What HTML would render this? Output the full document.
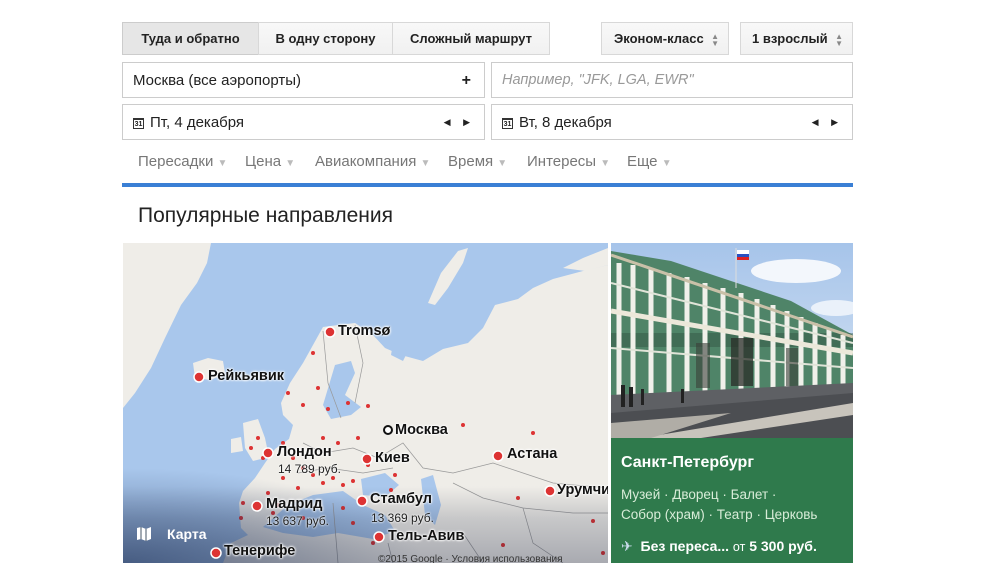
<!DOCTYPE html>
<html><head><meta charset="utf-8"><style>
body{margin:0;width:1000px;height:563px;background:#fff;font-family:"Liberation Sans",sans-serif;position:relative;overflow:hidden}
.a{position:absolute;box-sizing:border-box}
.btn{background:linear-gradient(#f8f8f8,#f1f1f1);border:1px solid #d8d8d8;color:#222;font-size:13px;font-weight:bold;text-align:center;line-height:32px}
.inp{border:1px solid #ccc;background:#fff;font-size:15px;color:#222;line-height:35px;padding-left:10px}
.f{position:absolute;top:153px;font-size:15px;color:#777}
.f i{font-style:normal;color:#bbb;font-size:10px}
.lb{position:absolute;font-weight:bold;font-size:14.5px;color:#111;text-shadow:0 0 2px #fff,0 0 2px #fff,0 0 3px #fff}
.pr{position:absolute;font-size:12px;color:#222;text-shadow:0 0 2px #fff,0 0 2px #fff}
.cal{display:inline-block;width:11px;height:11px;border:1px solid #333;font-size:7px;line-height:9px;text-align:center;vertical-align:1px;margin-right:6px;font-weight:bold;box-sizing:border-box;border-top-width:2px}
</style></head><body>
<div class="a btn" style="left:122px;top:22px;width:137px;height:33px;background:#e6e6e6;border-color:#ccc">Туда и обратно</div>
<div class="a btn" style="left:258px;top:22px;width:135px;height:33px">В одну сторону</div>
<div class="a btn" style="left:392px;top:22px;width:158px;height:33px">Сложный маршрут</div>
<div class="a btn" style="left:601px;top:22px;width:128px;height:33px;text-align:left;padding-left:12px">Эконом-класс<span style="position:absolute;right:9px;color:#888;font-size:8px;line-height:7px;top:10px">▲<br>▼</span></div>
<div class="a btn" style="left:740px;top:22px;width:113px;height:33px;text-align:left;padding-left:11px">1 взрослый<span style="position:absolute;right:9px;color:#888;font-size:8px;line-height:7px;top:10px">▲<br>▼</span></div>
<div class="a inp" style="left:122px;top:62px;width:363px;height:36px">Москва (все аэропорты)<span style="position:absolute;right:13px;font-weight:bold;font-size:16px">+</span></div>
<div class="a inp" style="left:491px;top:62px;width:362px;height:36px;color:#999;font-style:italic;font-size:14.5px">Например, "JFK, LGA, EWR"</div>
<div class="a inp" style="left:122px;top:104px;width:363px;height:36px"><span class="cal">31</span>Пт, 4 декабря<span style="position:absolute;right:14px;font-size:9px">◀&nbsp;&nbsp;&nbsp;&nbsp;&nbsp;▶</span></div>
<div class="a inp" style="left:491px;top:104px;width:362px;height:36px"><span class="cal">31</span>Вт, 8 декабря<span style="position:absolute;right:14px;font-size:9px">◀&nbsp;&nbsp;&nbsp;&nbsp;&nbsp;▶</span></div>
<div class="f" style="left:138px">Пересадки <i>▼</i></div>
<div class="f" style="left:245px">Цена <i>▼</i></div>
<div class="f" style="left:315px">Авиакомпания <i>▼</i></div>
<div class="f" style="left:448px">Время <i>▼</i></div>
<div class="f" style="left:527px">Интересы <i>▼</i></div>
<div class="f" style="left:627px">Еще <i>▼</i></div>
<div class="a" style="left:122px;top:183px;width:731px;height:4px;background:#3a7fd5"></div>
<div class="a" style="left:138px;top:204px;font-size:21px;color:#222">Популярные направления</div>

<div class="a" style="left:123px;top:243px;width:485px;height:320px;overflow:hidden;background:#a9c7ec">
<svg width="485" height="320" style="position:absolute;left:0;top:0">
<g fill="#efede8">
<polygon points="62,0 88,0 84,20 74,40 58,62 42,95 28,125 12,150 0,165 0,0"/>
<polygon points="70,120 85,115 100,118 102,130 88,137 72,135"/>
<polygon points="305,60 318,30 335,8 345,5 340,20 325,45 312,62"/>
<polygon points="200,84 215,82 232,80 250,92 262,105 278,112 300,118 320,106 345,100 360,85 372,62 395,56 410,45 430,36 460,28 485,22 485,320 100,320 108,300 125,292 118,285 116,260 120,248 132,235 142,220 152,206 166,196 170,182 160,172 158,160 167,140 180,120 190,102"/>
<polygon points="120,180 135,176 142,195 146,214 130,218 122,205"/>
<polygon points="108,196 118,194 120,208 108,210"/>
<polygon points="440,25 460,15 485,5 485,22 462,28"/>
</g>
<g fill="#a9c7ec">
<polygon points="212,122 228,118 232,130 222,152 238,164 228,172 208,176 200,162"/>
<polygon points="140,284 165,262 190,252 220,248 240,262 262,272 272,288 250,296 215,290 190,294 160,290"/>
<polygon points="238,236 262,230 276,242 262,254 240,252"/>
<polygon points="298,236 310,232 318,262 312,282 302,272"/>
<polygon points="270,100 285,108 280,118 268,112"/>
</g>
<g stroke="#999" stroke-width="0.7" fill="none">
<polyline points="200,88 205,140 218,175"/><polyline points="232,82 240,120 232,160"/>
<polyline points="180,200 200,210 230,205 255,215 280,200 300,225 330,230 370,220 400,230 430,240 485,245"/>
<polyline points="175,230 205,225 240,230 270,225"/><polyline points="330,240 360,255 400,265 450,270 485,270"/>
<polyline points="400,265 410,300 440,320"/><polyline points="210,260 215,320"/><polyline points="265,300 270,320"/><polyline points="340,290 360,320"/>
</g>
<g fill="#d33">
<circle cx="160" cy="200" r="2"/><circle cx="170" cy="215" r="2"/><circle cx="180" cy="225" r="2"/><circle cx="190" cy="232" r="2"/><circle cx="200" cy="240" r="2"/><circle cx="210" cy="235" r="2"/><circle cx="220" cy="242" r="2"/><circle cx="230" cy="238" r="2"/><circle cx="175" cy="245" r="2"/><circle cx="160" cy="235" r="2"/><circle cx="140" cy="215" r="2"/><circle cx="135" cy="195" r="2"/><circle cx="128" cy="205" r="2"/><circle cx="145" cy="250" r="2"/><circle cx="155" cy="262" r="2"/><circle cx="120" cy="260" r="2"/><circle cx="118" cy="275" r="2"/><circle cx="165" cy="150" r="2"/><circle cx="180" cy="162" r="2"/><circle cx="195" cy="145" r="2"/><circle cx="205" cy="166" r="2"/><circle cx="225" cy="160" r="2"/><circle cx="245" cy="163" r="2"/><circle cx="235" cy="195" r="2"/><circle cx="245" cy="222" r="2"/><circle cx="272" cy="232" r="2"/><circle cx="268" cy="247" r="2"/><circle cx="220" cy="265" r="2"/><circle cx="230" cy="280" r="2"/><circle cx="250" cy="300" r="2"/><circle cx="310" cy="290" r="2"/><circle cx="340" cy="182" r="2"/><circle cx="410" cy="190" r="2"/><circle cx="395" cy="255" r="2"/><circle cx="470" cy="278" r="2"/><circle cx="480" cy="310" r="2"/><circle cx="380" cy="302" r="2"/><circle cx="180" cy="275" r="2"/><circle cx="190" cy="110" r="2"/><circle cx="200" cy="195" r="2"/><circle cx="215" cy="200" r="2"/><circle cx="150" cy="270" r="2"/>
</g>
</svg>
<div class="a" style="left:0;top:0;width:485px;height:320px;background:linear-gradient(rgba(0,0,0,0) 76%,rgba(20,30,60,.18) 86%,rgba(20,30,60,.32));"></div>
<div class="a" style="left:0;top:225px;width:300px;height:95px;background:radial-gradient(ellipse 100% 100% at 0% 100%,rgba(30,50,90,.55),rgba(30,50,90,0))"></div>
<svg width="485" height="320" style="position:absolute;left:0;top:0">
<g fill="#d33" stroke="#fff" stroke-width="1.5">
<circle cx="207" cy="89" r="5"/><circle cx="76" cy="134" r="5"/><circle cx="145" cy="210" r="5"/><circle cx="244" cy="216" r="5"/><circle cx="375" cy="213" r="5"/><circle cx="427" cy="248" r="5"/><circle cx="239" cy="258" r="5"/><circle cx="134" cy="263" r="5"/><circle cx="256" cy="294" r="5"/><circle cx="93" cy="310" r="5"/>
</g>
<circle cx="265" cy="187" r="4" fill="#fff" stroke="#111" stroke-width="2"/>
</svg>
<div class="lb" style="left:215px;top:80px">Tromsø</div>
<div class="lb" style="left:85px;top:125px">Рейкьявик</div>
<div class="lb" style="left:272px;top:179px">Москва</div>
<div class="lb" style="left:154px;top:201px">Лондон</div><div class="pr" style="left:155px;top:219px">14 789 руб.</div>
<div class="lb" style="left:252px;top:207px">Киев</div>
<div class="lb" style="left:384px;top:203px">Астана</div>
<div class="lb" style="left:434px;top:239px">Урумчи</div>
<div class="lb" style="left:247px;top:248px">Стамбул</div><div class="pr" style="left:248px;top:268px">13 369 руб.</div>
<div class="lb" style="left:143px;top:253px">Мадрид</div><div class="pr" style="left:143px;top:271px">13 637 руб.</div>
<div class="lb" style="left:265px;top:285px">Тель-Авив</div>
<div class="lb" style="left:101px;top:300px">Тенерифе</div>
<svg width="16" height="15" style="position:absolute;left:13px;top:283px"><path d="M1 2 L5 1 L10 3 L15 1 L15 13 L10 15 L5 13 L1 14 Z" fill="#fff"/><path d="M5 1 V13 M10 3 V15" stroke="#456" stroke-width="1"/></svg>
<div class="a" style="left:44px;top:283px;color:#fff;font-weight:bold;font-size:14px">Карта</div>
<div class="a" style="left:255px;top:311px;color:#333;font-size:10px">©2015 Google · Условия использования</div>
</div>

<div class="a" style="left:611px;top:243px;width:242px;height:195px;overflow:hidden;background:linear-gradient(#a6c4ea,#dde8f4)">
<svg width="242" height="195" style="position:absolute;left:0;top:0">
<ellipse cx="185" cy="28" rx="45" ry="12" fill="#fff" opacity=".85"/>
<ellipse cx="225" cy="65" rx="25" ry="8" fill="#fff" opacity=".7"/>
<polygon points="0,8 60,18 120,38 180,58 242,92 242,145 0,155" fill="#4f8468"/>
<g fill="#2c4a3c">
<rect x="0" y="90" width="242" height="14" opacity=".4"/>
</g>
<g stroke="#f0f0ea" stroke-width="5">
<line x1="8" y1="20" x2="8" y2="152"/><line x1="22" y1="22" x2="22" y2="152"/><line x1="40" y1="26" x2="40" y2="151"/><line x1="58" y1="30" x2="58" y2="150"/><line x1="76" y1="34" x2="76" y2="150"/><line x1="94" y1="40" x2="94" y2="149"/><line x1="112" y1="45" x2="112" y2="148"/><line x1="130" y1="50" x2="130" y2="148"/><line x1="146" y1="56" x2="146" y2="147"/><line x1="162" y1="62" x2="162" y2="146"/><line x1="176" y1="68" x2="176" y2="146"/><line x1="190" y1="74" x2="190" y2="145"/><line x1="204" y1="80" x2="204" y2="145"/><line x1="218" y1="86" x2="218" y2="145"/><line x1="232" y1="92" x2="232" y2="145"/>
</g>
<g stroke="#e0e4d8" stroke-width="2"><line x1="0" y1="40" x2="242" y2="100"/><line x1="0" y1="105" x2="242" y2="125"/></g>
<line x1="0" y1="68" x2="242" y2="110" stroke="#ece8da" stroke-width="5"/>
<line x1="0" y1="12" x2="242" y2="94" stroke="#c9c0a8" stroke-width="3"/>
<rect x="120" y="95" width="22" height="48" fill="#2a2e28" opacity=".75"/><rect x="85" y="100" width="14" height="45" fill="#3a4038" opacity=".6"/><rect x="175" y="105" width="12" height="38" fill="#3a4038" opacity=".6"/>
<polygon points="0,152 242,140 242,195 0,195" fill="#5e6064"/>
<polygon points="0,170 242,150 242,195 0,195" fill="#4c4e52"/>
<polygon points="30,195 242,160 242,172 90,195" fill="#c8c4bc"/>
<polygon points="0,195 0,180 120,170 40,195" fill="#b0ada6"/>
<g fill="#222"><rect x="10" y="142" width="4" height="22"/><rect x="18" y="144" width="4" height="20"/><rect x="30" y="146" width="3" height="16"/><rect x="70" y="146" width="3" height="14"/></g>
<rect x="126" y="7" width="12" height="8" fill="#fff"/><rect x="126" y="11" width="12" height="3" fill="#2a50c0"/><rect x="126" y="14" width="12" height="3" fill="#d22"/>
<line x1="125" y1="5" x2="125" y2="45" stroke="#ddd" stroke-width="1"/>
</svg>
</div>
<div class="a" style="left:611px;top:438px;width:242px;height:125px;background:#2f7a4c;color:#fff">
<div class="a" style="left:10px;top:16px;font-weight:bold;font-size:16px">Санкт-Петербург</div>
<div class="a" style="left:10px;top:47px;font-size:13.5px;line-height:20px;color:#d8ecd8">Музей · Дворец · Балет ·<br>Собор (храм) · Театр · Церковь</div>
<div class="a" style="left:10px;top:100px;font-size:14px;white-space:nowrap"><span style="color:#cde">✈</span>&nbsp; <b>Без переса...</b> <span style="font-size:12.5px">от</span> <b>5 300 руб.</b></div>
</div>
</body></html>
